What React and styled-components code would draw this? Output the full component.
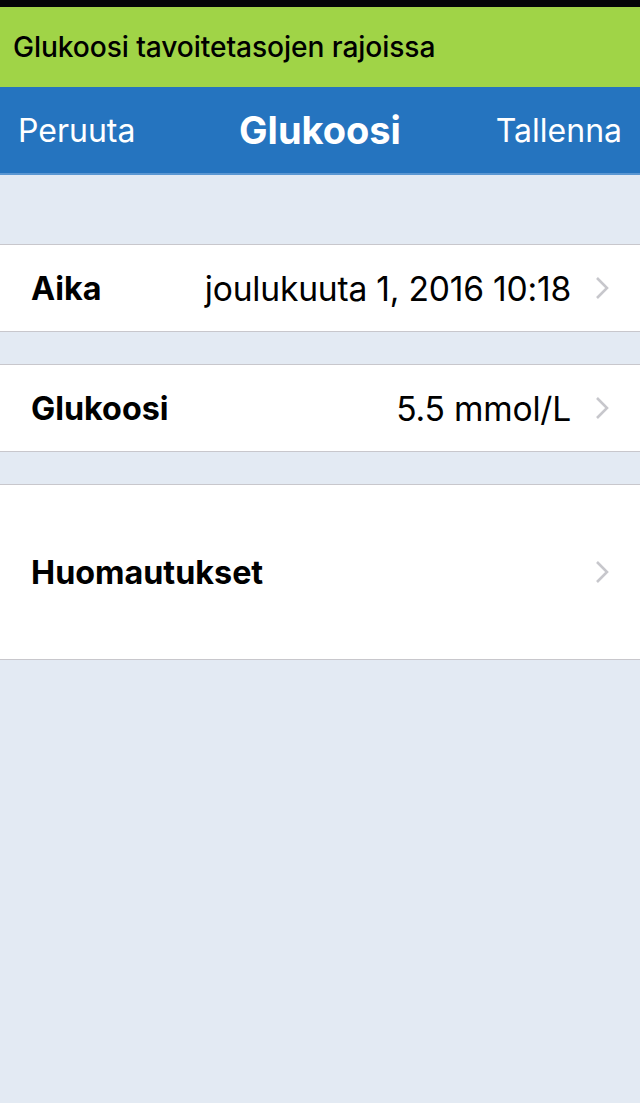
import React from 'react';
import styled, { createGlobalStyle } from 'styled-components';

const GlobalStyle = createGlobalStyle`
  html, body {
    margin: 0;
    padding: 0;
    background: #e3eaf3;
  }
  body {
    font-family: Inter, "Liberation Sans", sans-serif;
    -webkit-font-smoothing: antialiased;
  }
`;

const Screen = styled.div`
  width: 640px;
  min-height: 1103px;
  background: #e3eaf3;
  display: flex;
  flex-direction: column;
`;

const StatusBar = styled.div`
  height: 7px;
  background: #050608;
`;

const Banner = styled.div`
  height: 80px;
  background: #a0d447;
  display: flex;
  align-items: center;
  padding-left: 13px;
  font-size: 28.2px;
  font-weight: 500;
  letter-spacing: -0.1px;
  color: #000;
`;

const NavBar = styled.div`
  height: 86px;
  background: #2574bf;
  border-bottom: 2px solid #5b97d2;
  display: grid;
  grid-template-columns: 1fr auto 1fr;
  align-items: center;
  padding: 0 18px;
  color: #fff;
`;

const NavButton = styled.span`
  font-size: 32px;
  font-weight: 400;
  justify-self: ${(p) => (p.right ? 'end' : 'start')};
`;

const NavTitle = styled.span`
  font-size: 38px;
  font-weight: 700;
`;

const Section = styled.div`
  margin-top: ${(p) => p.gap}px;
  background: #fff;
  border-top: 1px solid #c8c7cc;
  border-bottom: 1px solid #c8c7cc;
`;

const Row = styled.div`
  height: ${(p) => p.h}px;
  display: flex;
  align-items: center;
  padding: 0 31px 0 31px;
  color: #000;
`;

const Label = styled.span`
  font-size: 32.3px;
  font-weight: 700;
  flex: 1;
`;

const Value = styled.span`
  font-size: 33.6px;
  font-weight: 400;
  letter-spacing: -0.2px;
  margin-right: 24px;
`;

const Chevron = () => (
  <svg width="14" height="24" viewBox="0 0 14 24">
    <path d="M2 2 L12 12 L2 22" fill="none" stroke="#c7c7cc" strokeWidth="2.6" />
  </svg>
);

const rows = [
  { label: 'Aika', value: 'joulukuuta 1, 2016 10:18', h: 86, gap: 69 },
  { label: 'Glukoosi', value: '5.5 mmol/L', h: 86, gap: 32 },
  { label: 'Huomautukset', value: '', h: 174, gap: 32 },
];

export default function App() {
  return (
    <Screen>
      <GlobalStyle />
      <StatusBar />
      <Banner>Glukoosi tavoitetasojen rajoissa</Banner>
      <NavBar>
        <NavButton>Peruuta</NavButton>
        <NavTitle>Glukoosi</NavTitle>
        <NavButton right>Tallenna</NavButton>
      </NavBar>
      {rows.map((r) => (
        <Section key={r.label} gap={r.gap}>
          <Row h={r.h}>
            <Label>{r.label}</Label>
            {r.value && <Value>{r.value}</Value>}
            <Chevron />
          </Row>
        </Section>
      ))}
    </Screen>
  );
}
